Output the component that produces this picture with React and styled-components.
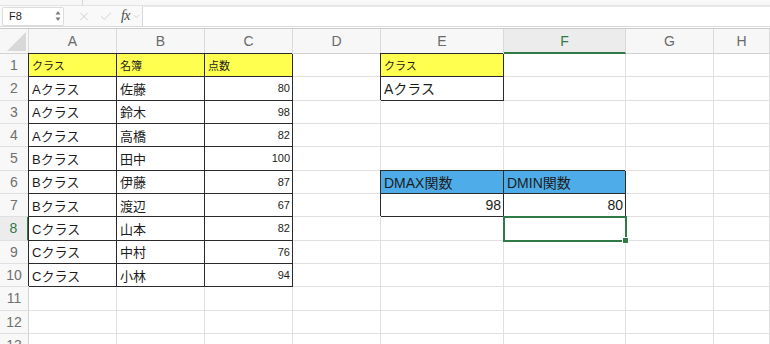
import React from "react";
import styled, { createGlobalStyle, css } from "styled-components";
import { X, Check, ChevronDown } from "lucide-react";

const GlobalStyle = createGlobalStyle`
  html, body {
    margin: 0;
    padding: 0;
    background: #fff;
    overflow: hidden;
  }
  body {
    font-family: "Liberation Sans", "Noto Sans CJK JP", sans-serif;
  }
`;

const YELLOW = "#ffff50";
const BLUE = "#4eade8";
const GREEN = "#2f7a47";
const GRID = "#e0e0e0";
const INK = "#2b2b2b";

const COLS = ["A", "B", "C", "D", "E", "F", "G", "H"];
const ACTIVE_COL = "F";
const ACTIVE_ROW = 8;

const E = {};
const head = (v) => ({ v, fill: YELLOW, box: true, size: 11 });
const txt = (v) => ({ v, box: true, size: 13 });
const num = (v) => ({ v, box: true, size: 11, right: true });
const big = (v, extra) => ({ v, box: true, size: 14, ...extra });

const sheet = [
  [head("クラス"), head("名簿"), head("点数"), E, head("クラス"), E, E, E],
  [txt("Aクラス"), txt("佐藤"), num(80), E, big("Aクラス"), E, E, E],
  [txt("Aクラス"), txt("鈴木"), num(98), E, E, E, E, E],
  [txt("Aクラス"), txt("高橋"), num(82), E, E, E, E, E],
  [txt("Bクラス"), txt("田中"), num(100), E, E, E, E, E],
  [txt("Bクラス"), txt("伊藤"), num(87), E, big("DMAX関数", { fill: BLUE }), big("DMIN関数", { fill: BLUE }), E, E],
  [txt("Bクラス"), txt("渡辺"), num(67), E, big(98, { right: true }), big(80, { right: true }), E, E],
  [txt("Cクラス"), txt("山本"), num(82), E, E, { selected: true }, E, E],
  [txt("Cクラス"), txt("中村"), num(76), E, E, E, E, E],
  [txt("Cクラス"), txt("小林"), num(94), E, E, E, E, E],
  [E, E, E, E, E, E, E, E],
  [E, E, E, E, E, E, E, E],
  [E, E, E, E, E, E, E, E],
];

const App = () => (
  <Window>
    <GlobalStyle />
    <TopStrip>
      <StripTick style={{ marginLeft: 82 }} />
    </TopStrip>
    <FormulaBar>
      <NameBox>
        <span>F8</span>
        <Spinner>
          <svg width="6" height="12" viewBox="0 0 6 12">
            <path d="M3 1 L5.5 4.5 H0.5 Z" fill="#7a7a7a" />
            <path d="M3 11 L5.5 7.5 H0.5 Z" fill="#7a7a7a" />
          </svg>
        </Spinner>
      </NameBox>
      <BarIcons>
        <X size={15} strokeWidth={1.3} color="#c2c2c2" />
        <Check size={15} strokeWidth={1.3} color="#c2c2c2" />
        <Fx>
          fx
          <ChevronDown size={9} strokeWidth={1.5} color="#b5b5b5" />
        </Fx>
      </BarIcons>
      <FormulaInput />
    </FormulaBar>
    <Gap />
    <Sheet>
      <Corner>
        <svg width="28" height="24" viewBox="0 0 28 24">
          <path d="M7 22 L26 22 L26 3 Z" fill="#d8d8d8" />
        </svg>
      </Corner>
      {COLS.map((c) => (
        <ColHead key={c} $active={c === ACTIVE_COL}>
          {c}
        </ColHead>
      ))}
      {sheet.map((row, r) => (
        <React.Fragment key={r}>
          <RowHead $active={r + 1 === ACTIVE_ROW}>{r + 1}</RowHead>
          {row.map((cell, c) => (
            <Cell
              key={c}
              $fill={cell.fill}
              $box={cell.box}
              $size={cell.size || 13}
              $right={cell.right}
              $selected={cell.selected}
            >
              {cell.v}
            </Cell>
          ))}
        </React.Fragment>
      ))}
    </Sheet>
  </Window>
);

const Window = styled.div`
  width: 100vw;
  height: 100vh;
  overflow: hidden;
  background: #fff;
  display: flex;
  flex-direction: column;
`;

const TopStrip = styled.div`
  height: 5px;
  flex: none;
  display: flex;
  background: #f7f7f7;
  border-bottom: 1px solid #e2e2e2;
`;

const StripTick = styled.span`
  width: 1px;
  background: #d6d6d6;
`;

const FormulaBar = styled.div`
  height: 20px;
  flex: none;
  display: flex;
  align-items: center;
  padding-left: 2px;
  background: #f9f9f9;
  border-bottom: 1px solid #dadada;
`;

const NameBox = styled.div`
  width: 62px;
  height: 19px;
  box-sizing: border-box;
  display: flex;
  align-items: center;
  justify-content: space-between;
  padding: 0 2px 0 6px;
  background: #fff;
  border: 1px solid #dcdcdc;
  border-radius: 2px;
  font-size: 11px;
  color: #222;
`;

const Spinner = styled.span`
  display: flex;
  align-items: center;
`;

const BarIcons = styled.div`
  display: flex;
  align-items: center;
  gap: 8px;
  padding-left: 13px;
  width: 64px;
`;

const Fx = styled.span`
  display: flex;
  align-items: center;
  gap: 2px;
  font-family: "Liberation Serif", serif;
  font-style: italic;
  font-size: 14px;
  color: #4a4a4a;
  letter-spacing: -0.5px;
`;

const FormulaInput = styled.div`
  flex: 1;
  height: 19px;
  margin-left: 1px;
  background: #fff;
  border-left: 1px solid #d6d6d6;
  border-top: 1px solid #ececec;
`;

const Gap = styled.div`
  height: 1px;
  flex: none;
  background: #fff;
  border-bottom: 1px solid #cbcbcb;
`;

const Sheet = styled.div`
  display: grid;
  grid-template-columns: 29px 88px 88px 88px 88px 123px 122px 88px 1fr;
  grid-template-rows: 25px;
  grid-auto-rows: 23.333px;
  font-family: "Liberation Sans", "Noto Sans CJK JP", sans-serif;
`;

const Corner = styled.div`
  box-sizing: border-box;
  background: #f7f7f7;
  border-right: 1px solid #dadada;
  border-bottom: 1px solid #d2d2d2;
  display: flex;
  align-items: flex-end;
  justify-content: flex-end;
  svg {
    display: block;
  }
`;

const ColHead = styled.div`
  box-sizing: border-box;
  display: flex;
  align-items: center;
  justify-content: center;
  font-size: 14px;
  background: ${(p) => (p.$active ? "#ececec" : "#f7f7f7")};
  color: ${(p) => (p.$active ? GREEN : "#6a6a6a")};
  border-right: 1px solid #dadada;
  border-bottom: ${(p) => (p.$active ? `2px solid ${GREEN}` : "1px solid #d2d2d2")};
`;

const RowHead = styled.div`
  box-sizing: border-box;
  display: flex;
  align-items: center;
  justify-content: center;
  font-size: 14px;
  background: ${(p) => (p.$active ? "#ececec" : "#f8f8f8")};
  color: ${(p) => (p.$active ? GREEN : "#707070")};
  border-right: ${(p) => (p.$active ? `2px solid ${GREEN}` : "1px solid #d2d2d2")};
  border-bottom: 1px solid ${GRID};
`;

const Cell = styled.div`
  box-sizing: border-box;
  min-width: 0;
  display: flex;
  align-items: center;
  justify-content: ${(p) => (p.$right ? "flex-end" : "flex-start")};
  padding: 0 ${(p) => (p.$right ? "2px" : "3px")};
  white-space: nowrap;
  overflow: hidden;
  font-size: ${(p) => p.$size}px;
  color: #1c1c1c;
  background: ${(p) => p.$fill || "#fff"};
  border-right: 1px solid ${(p) => (p.$box ? INK : GRID)};
  border-bottom: 1px solid ${(p) => (p.$box ? INK : GRID)};
  ${(p) =>
    p.$box &&
    css`
      box-shadow: -1px -1px 0 ${INK};
    `}
  ${(p) =>
    p.$selected &&
    css`
      position: relative;
      overflow: visible;
      outline: 2px solid ${GREEN};
      outline-offset: -1px;
      &::after {
        content: "";
        position: absolute;
        right: -4px;
        bottom: -4px;
        width: 5px;
        height: 5px;
        background: ${GREEN};
        border: 1px solid #fff;
      }
    `}
`;

export default App;
